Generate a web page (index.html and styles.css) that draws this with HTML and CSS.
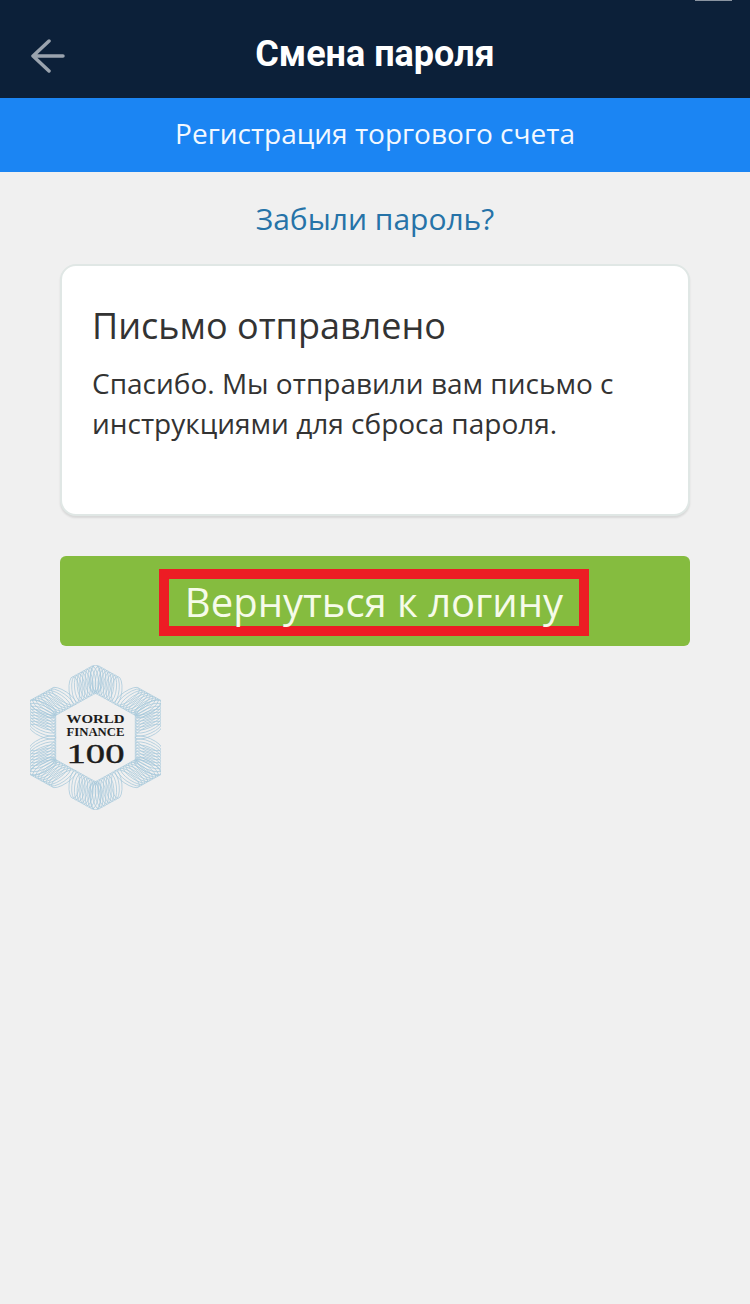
FILE: index.html
```html
<!DOCTYPE html>
<html lang="en">
<head>
    <meta charset="UTF-8">
    <meta name="viewport" content="width=device-width, initial-scale=1.0">
    <title>Смена пароля</title>
    <link rel="stylesheet" href="styles.css">
</head>
<body>
    <header class="top-bar">
        <span class="status-mark"></span>
        <svg class="back-icon" width="34" height="34" viewBox="0 0 34 34">
            <path d="M18 2 L2 17 L18 32 M2 17 H32"></path>
        </svg>
        <h1>Смена пароля</h1>
    </header>
    <div class="sub-bar">Регистрация торгового счета</div>

    <main class="content">
        <a class="forgot-link" href="#">Забыли пароль?</a>

        <section class="card">
            <h2>Письмо отправлено</h2>
            <p>Спасибо. Мы отправили вам письмо с инструкциями для сброса пароля.</p>
        </section>

        <button class="back-button"><span class="marked">Вернуться к логину</span></button>

        <div class="award">
            <svg width="131" height="145" viewBox="-65.5 -72.5 131 145">
                <defs>
                    <g id="lobe" transform="translate(10 -53) rotate(30)">
                        <ellipse cx="-12" rx="5" ry="14" transform="translate(-12 0) rotate(-25) translate(12 0)"></ellipse>
                        <ellipse cx="-9" rx="5" ry="14" transform="translate(-9 0) rotate(-25) translate(9 0)"></ellipse>
                        <ellipse cx="-6" rx="5" ry="14" transform="translate(-6 0) rotate(-25) translate(6 0)"></ellipse>
                        <ellipse cx="-3" rx="5" ry="14" transform="translate(-3 0) rotate(-25) translate(3 0)"></ellipse>
                        <ellipse cx="0" rx="5" ry="14" transform="rotate(-25)"></ellipse>
                        <ellipse cx="3" rx="5" ry="14" transform="translate(3 0) rotate(-25) translate(-3 0)"></ellipse>
                        <ellipse cx="6" rx="5" ry="14" transform="translate(6 0) rotate(-25) translate(-6 0)"></ellipse>
                        <ellipse cx="9" rx="5" ry="14" transform="translate(9 0) rotate(-25) translate(-9 0)"></ellipse>
                        <ellipse cx="12" rx="5" ry="14" transform="translate(12 0) rotate(-25) translate(-12 0)"></ellipse>
                    </g>
                    <g id="pair">
                        <use href="#lobe"></use>
                        <use href="#lobe" transform="scale(-1 1)"></use>
                    </g>
                </defs>
                <g class="rosette" transform="scale(1.04 1)">
                    <use href="#pair"></use>
                    <use href="#pair" transform="rotate(60)"></use>
                    <use href="#pair" transform="rotate(120)"></use>
                    <use href="#pair" transform="rotate(180)"></use>
                    <use href="#pair" transform="rotate(240)"></use>
                    <use href="#pair" transform="rotate(300)"></use>
                </g>
                <text class="award-word" x="0" y="-14.5" textLength="58" lengthAdjust="spacingAndGlyphs">WORLD</text>
                <text class="award-word" x="0" y="-2" textLength="58" lengthAdjust="spacingAndGlyphs">FINANCE</text>
                <text class="award-num" x="0" y="25.5" textLength="58" lengthAdjust="spacingAndGlyphs">100</text>
            </svg>
        </div>
    </main>
</body>
</html>
```

FILE: styles.css
```css
* {
    box-sizing: border-box;
}

body {
    margin: 0;
    min-height: 1304px;
    background: #f0f0f0;
    font-family: "Open Sans", sans-serif;
    color: #333;
}

.top-bar {
    position: relative;
    height: 98px;
    padding-top: 10px;
    background: #0c2039;
    display: flex;
    align-items: center;
    justify-content: center;
}

.top-bar h1 {
    margin: 0;
    font-family: Roboto, sans-serif;
    font-size: 36px;
    font-weight: 700;
    color: #fff;
}

.status-mark {
    position: absolute;
    top: 0;
    left: 695px;
    width: 37px;
    height: 1px;
    background: #8a94a1;
}

.back-icon {
    position: absolute;
    left: 31px;
    top: 39px;
}

.back-icon path {
    fill: none;
    stroke: #9aa3ae;
    stroke-width: 3.5;
    stroke-linecap: round;
    stroke-linejoin: round;
}

.sub-bar {
    height: 74px;
    background: #1b85f3;
    color: #f2f8ff;
    font-size: 28px;
    line-height: 70px;
    text-align: center;
}

.content {
    display: flex;
    flex-direction: column;
}

.forgot-link {
    margin-top: 27px;
    font-size: 30px;
    line-height: 40px;
    text-align: center;
    color: #2673a8;
    text-decoration: none;
}

.card {
    width: 630px;
    height: 252px;
    margin: 25px 0 40px 60px;
    padding: 37px 30px 0 30px;
    background: #fff;
    border: 2px solid #e0e7e5;
    border-radius: 16px;
    box-shadow: 0 2px 2px rgba(0, 0, 0, 0.1);
}

.card h2 {
    margin: 0 0 14px;
    font-size: 36px;
    font-weight: 400;
    line-height: 46px;
}

.card p {
    margin: 0;
    font-size: 28px;
    line-height: 40px;
}

.back-button {
    width: 630px;
    height: 90px;
    margin-left: 60px;
    padding: 3px 2px 0 0;
    border: none;
    border-radius: 6px;
    background: #85bc3f;
    display: flex;
    align-items: center;
    justify-content: center;
    font-family: "Open Sans", sans-serif;
    color: #f6fbe9;
}

.marked {
    width: 430px;
    height: 67px;
    border: 10px solid #ed1c24;
    font-size: 40px;
    line-height: 46px;
    white-space: nowrap;
    text-align: center;
}

.award {
    margin: 19px 0 0 30px;
    width: 131px;
    height: 145px;
}

.rosette {
    fill: none;
    stroke: #a6c8da;
    stroke-width: 0.7;
}

.award text {
    font-family: "Liberation Serif", serif;
    text-anchor: middle;
    fill: #1c1c1c;
}

.award-word {
    font-size: 12.5px;
    font-weight: 700;
}

.award-num {
    font-size: 28px;
    stroke: #1c1c1c;
    stroke-width: 0.4;
}
```
